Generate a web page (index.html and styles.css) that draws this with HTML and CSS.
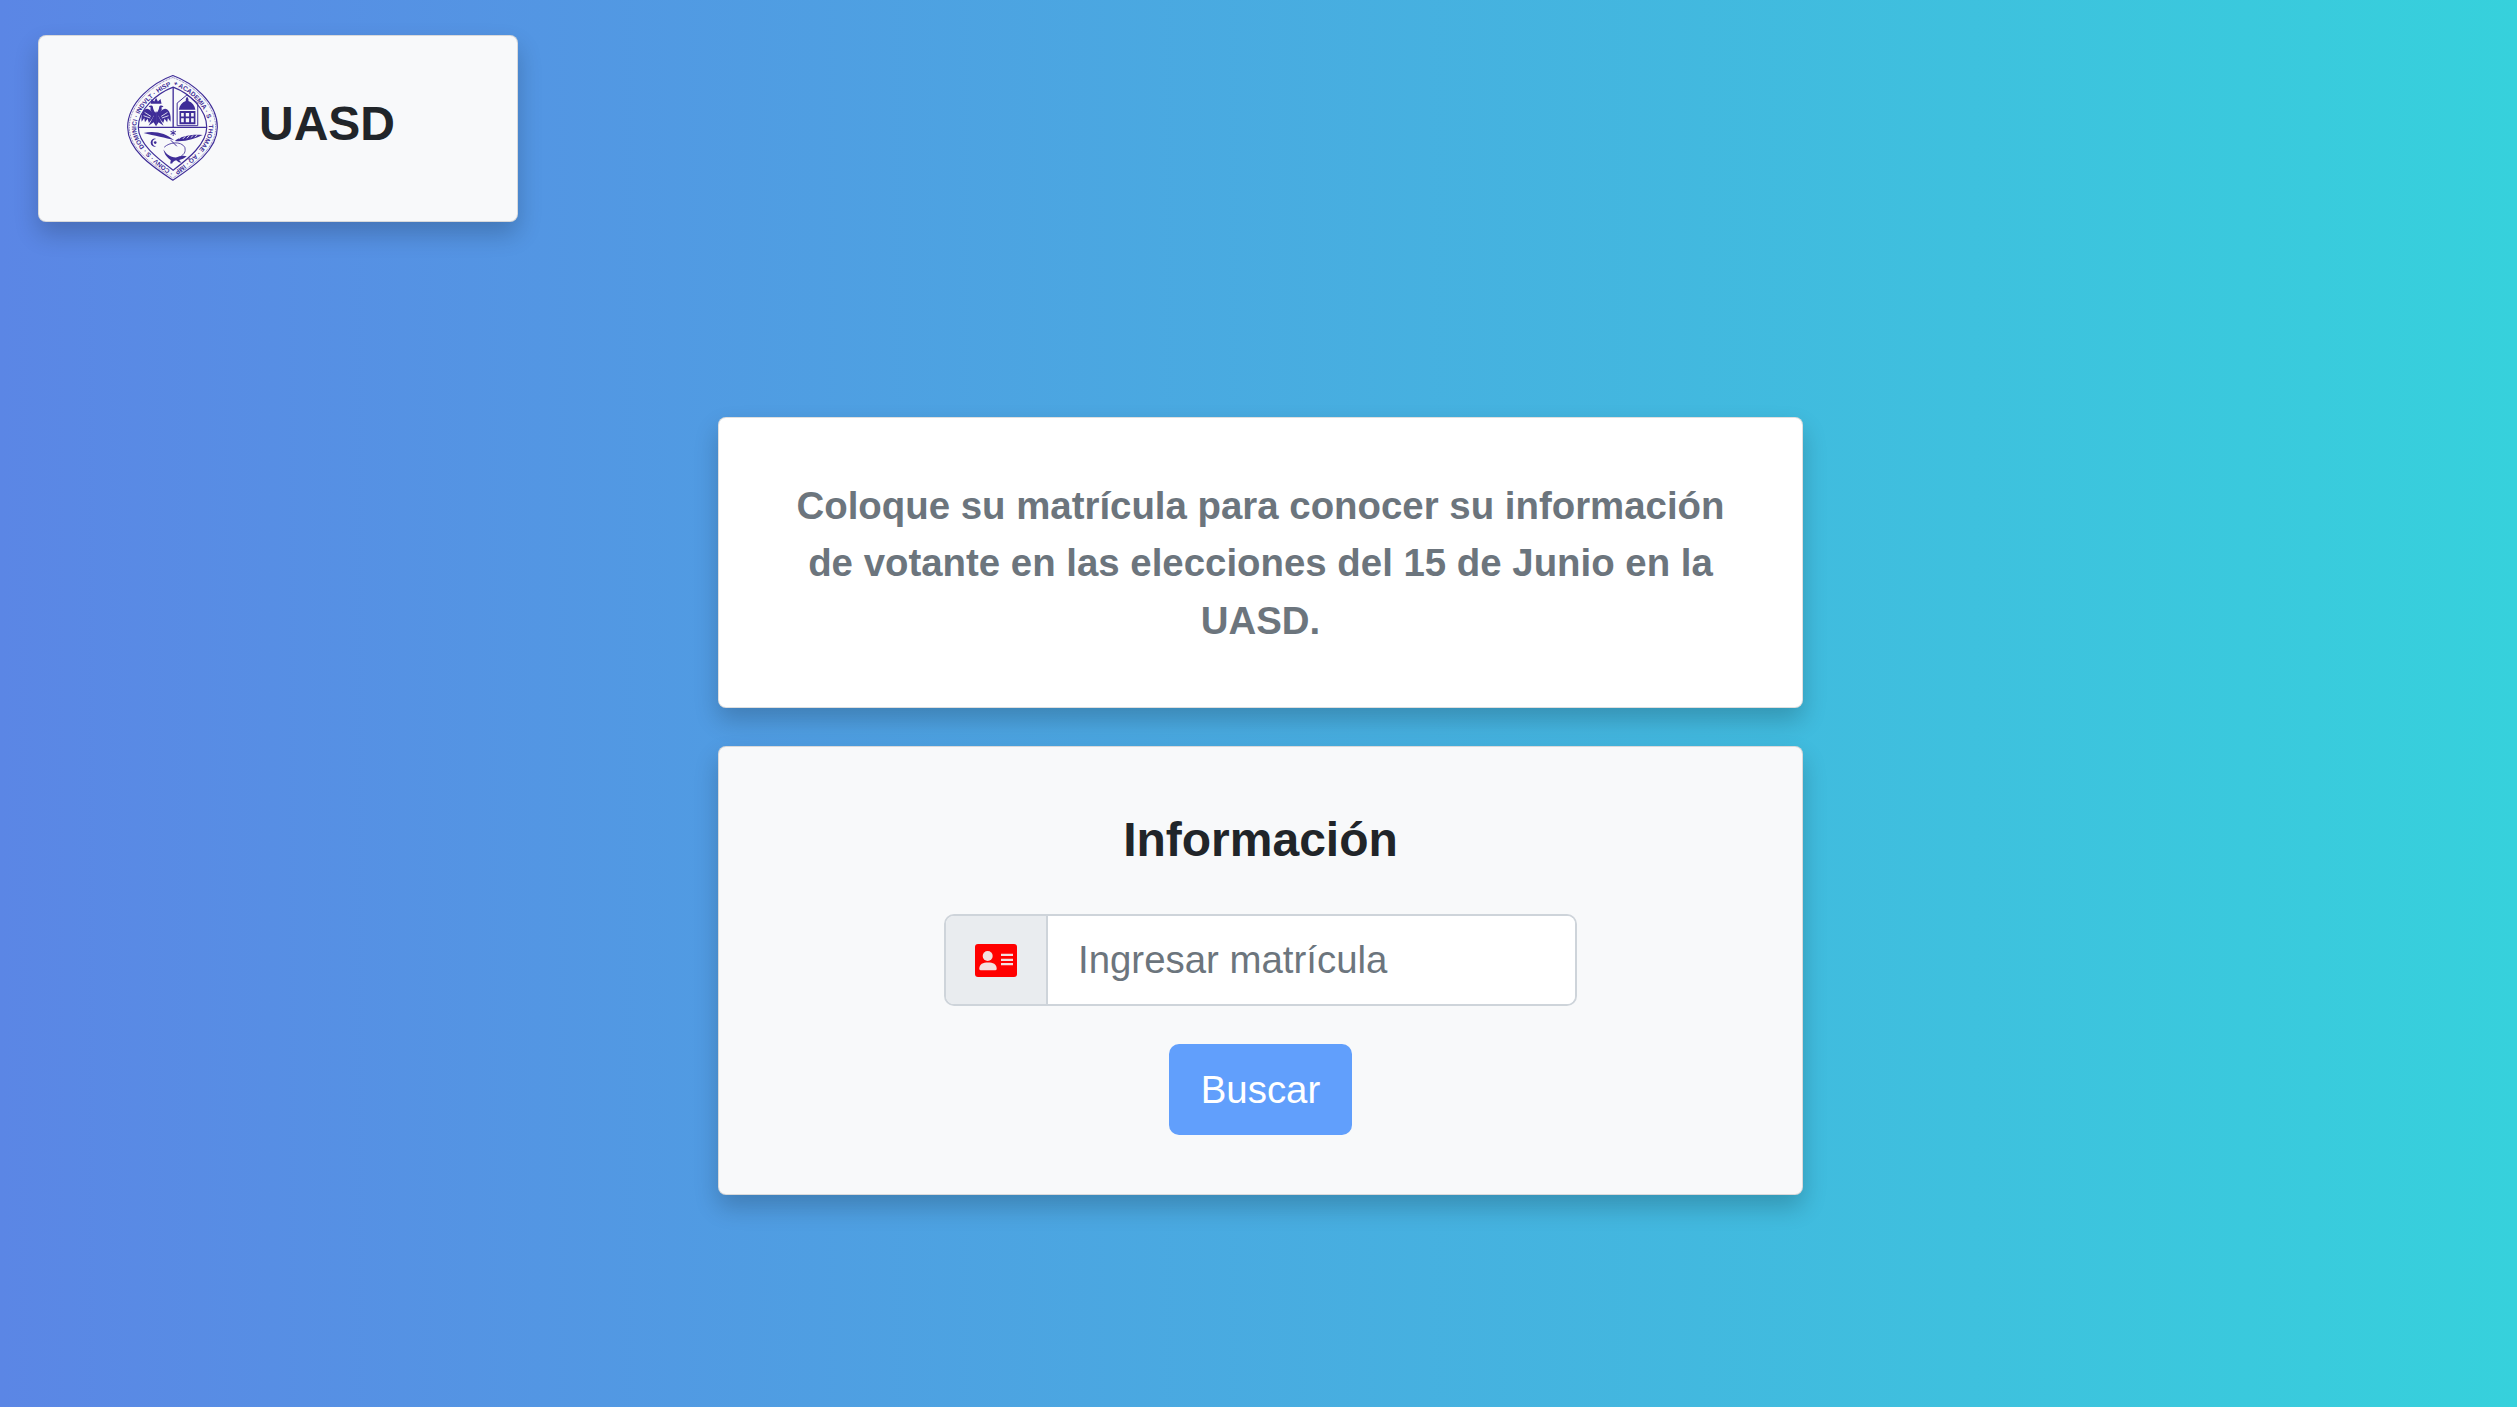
FILE: index.html
```html
<!DOCTYPE html>
<html lang="es">
<head>
<meta charset="utf-8">
<title>UASD</title>
<link rel="stylesheet" href="styles.css">
</head>
<body>
<header class="brand">
  <svg class="seal" viewBox="48 48 274 318" aria-hidden="true">
    <defs>
      <path id="ring" d="M187 77C238 96 294 148 294 205C294 258 234 306 187 341C140 306 76 258 76 205C76 148 136 96 187 77"/>
      <g id="half-eagle">
        <path d="M128 168C118 146 104 144 96 158C91 168 91 178 92 188L100 177L102 190L110 179L114 192L125 178Z"/>
        <path d="M134 162C128 154 126 148 126 143C124 138 118 138 113 142L120 146L118 150C120 156 124 166 130 174Z"/>
        <path d="M135.500 156V202L128 190L113 200L125 178Z"/>
        <path class="seal-cut" d="M101 160L120 172M98 170L118 177"/>
      </g>
    </defs>
    <g fill="none" stroke="#3f2d98">
      <path stroke-width="3.500" d="M186 49C245 70 320 130 320 205C320 275 245 325 186 364C127 325 50 275 50 205C50 130 127 70 186 49Z"/>
      <path stroke-width="2" stroke-dasharray="2.500 2.500" d="M186 55C242 75 315 133 315 205C315 272 242 320 186 358C130 320 55 272 55 205C55 133 130 75 186 55Z"/>
      <path stroke-width="3.500" d="M187 84C235 102 288 150 288 205C288 255 232 300 187 334C142 300 82 255 82 205C82 150 139 102 187 84Z"/>
      <path stroke-width="4" d="M82 205H288M187 84V205"/>
      <path stroke-width="3" d="M199 132L229 107L261 132V200H199Z"/>
      <path stroke-width="2.500" d="M160 265C175 250 210 245 222 265C226 280 218 288 212 290"/>
      <path stroke-width="3" d="M198 262L180 244"/>
    </g>
    <text class="seal-text"><textPath href="#ring" textLength="722" lengthAdjust="spacingAndGlyphs">+ ACADEMIA · S · THOMAE · AQ · IMP · CONV · S · DOMINICI · INDVLT · HISPN</textPath></text>
    <g fill="#3f2d98">
      <use href="#half-eagle"/>
      <use href="#half-eagle" transform="matrix(-1 0 0 1 271 0)"/>
      <path d="M119 134L122 120L130 127L135.500 116L141 127L149 120L152 134Z"/>
      <path d="M229 112L233 120V126C244 130 252 140 254 152H204C206 140 214 130 225 126V120Z"/>
      <path fill-rule="evenodd" d="M206 156H254V196H206ZM211 162V172H219V162ZM225 162V172H235V162ZM241 162V172H249V162ZM211 178V190H219V178ZM225 178V190H235V178ZM241 178V190H249V178Z"/>
      <path d="M185.500 212H188.500L188 219L194 215.500L195.500 218L189.500 221.500L195.500 225L194 227.500L188 224L188.500 231H185.500L186 224L180 227.500L178.500 225L184.500 221.500L178.500 218L180 215.500L186 219Z"/>
      <path d="M98 222C130 214 165 222 190 244C165 236 130 230 98 222Z"/>
      <path d="M192 246C208 232 240 225 276 228C255 238 220 250 192 246Z"/>
      <path d="M136 240A12 12 0 1 0 136 262A9 9 0 1 1 136 240Z"/>
      <circle cx="133" cy="251" r="4"/>
      <path d="M158 272C165 285 178 296 195 296C205 292 215 288 228 292C222 298 212 302 205 303L212 312L204 310L196 304C190 306 186 308 184 314L178 314L180 304C170 298 160 286 158 272Z"/>
    </g>
    <path class="seal-cut" d="M204 240L212 232M216 240L224 232M228 238L236 230M240 236L248 229M252 234L260 228"/>
  </svg>
  <h1 class="brand-name">UASD</h1>
</header>
<main class="main">
  <section class="card card-intro">
    <p class="intro">Coloque su matrícula para conocer su información de votante en las elecciones del 15 de Junio en la UASD.</p>
  </section>
  <section class="card card-form">
    <h2 class="form-title">Información</h2>
    <form class="form">
      <div class="input-group">
        <span class="addon">
          <svg class="id-icon" viewBox="0 0 42 33" aria-hidden="true">
            <rect width="42" height="33" rx="3" fill="#ff0000"/>
            <circle cx="12.700" cy="12" r="5" fill="#f3dfe0"/>
            <path d="M4.300 24.800C4.300 20 8 18.500 13 18.500S21.700 20 21.700 24.800Q21.700 26.300 20.200 26.300H5.800Q4.300 26.300 4.300 24.800Z" fill="#f3dfe0"/>
            <path d="M26 9.700H38V12H26ZM26 14.700H38V17H26ZM26 19H38V21.300H26Z" fill="#f3dfe0"/>
          </svg>
        </span>
        <input class="input" type="text" placeholder="Ingresar matrícula">
      </div>
      <button class="button" type="button">Buscar</button>
    </form>
  </section>
</main>
</body>
</html>
```
FILE: styles.css
```css
* { box-sizing: border-box; }
html, body { height: 100%; }
body {
  margin: 0;
  overflow: hidden;
  background: linear-gradient(to right, #5b86e5, #36d1dc);
  font-family: "Liberation Sans", Arial, sans-serif;
  color: #212529;
}
.card, .brand {
  border-radius: 8px;
  border: 1px solid rgba(0, 0, 0, .125);
  box-shadow: 0 12px 24px rgba(0, 0, 0, .2);
}
.brand {
  display: flex;
  align-items: center;
  gap: 41px;
  width: 480px;
  height: 187px;
  margin: 35px 0 0 38px;
  padding-left: 88px;
  background-color: #f8f9fa;
}
.seal { width: 91px; height: 106px; flex: none; margin-top: -2px; overflow: visible; }
.seal-text { font: bold 19px "Liberation Sans", Arial, sans-serif; fill: #3f2d98; }
.seal-cut { fill: none; stroke: #f8f9fa; stroke-width: 2.5; }
.brand-name {
  margin: 0 0 10px;
  font-size: 48px;
  line-height: 57.6px;
  font-weight: 700;
}
.main {
  display: flex;
  flex-direction: column;
  gap: 38px;
  width: 1085px;
  margin: 195px 0 0 718px;
}
.card-intro {
  padding: 58.500px 57px 57.500px;
  background-color: #fff;
}
.intro {
  margin: 0;
  text-align: center;
  font-size: 38.4px;
  line-height: 57.6px;
  font-weight: 700;
  color: #6c757d;
}
.card-form {
  display: flex;
  flex-direction: column;
  align-items: center;
  height: 449px;
  padding-top: 64px;
  background-color: #f8f9fa;
}
.form-title {
  margin: 0 0 46px;
  font-size: 48px;
  line-height: 57.6px;
  font-weight: 700;
}
.form {
  display: flex;
  flex-direction: column;
  align-items: center;
  gap: 38px;
}
.input-group {
  display: flex;
  width: 633px;
  height: 92px;
  border: 2px solid #ced4da;
  border-radius: 10px;
  overflow: hidden;
}
.addon {
  display: flex;
  align-items: center;
  justify-content: center;
  width: 102px;
  flex: none;
  background: #e9ecef;
  border-right: 2px solid #ced4da;
}
.id-icon { width: 42px; height: 33px; }
.input {
  flex: 1;
  min-width: 0;
  padding: 0 30px;
  border: 0;
  outline: 0;
  background: #fff;
  font: 38.4px "Liberation Sans", Arial, sans-serif;
  color: #495057;
}
.input::placeholder { color: #6c757d; opacity: 1; }
.button {
  width: 183px;
  height: 91px;
  padding: 0;
  border: 0;
  border-radius: 10px;
  background: #619ffc;
  color: #fff;
  font: 38.4px "Liberation Sans", Arial, sans-serif;
}
```
